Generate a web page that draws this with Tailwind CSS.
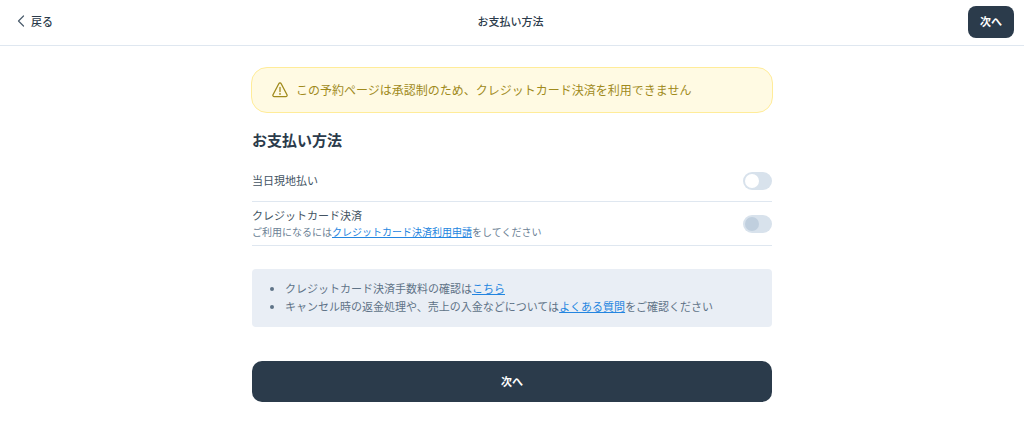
<!DOCTYPE html>
<html lang="ja">
<head>
<meta charset="utf-8">
<meta name="viewport" content="width=device-width, initial-scale=1">
<title>お支払い方法</title>
<script src="https://cdn.jsdelivr.net/npm/@tailwindcss/browser@4"></script>
</head>
<body class="bg-white font-['Noto_Sans_CJK_JP',sans-serif] text-[11px] leading-[18px] text-[#2b3b4b]">
<header class="flex items-center justify-between border-b border-[#dfe7f0] pt-1.5 pb-[7px] pl-[17px] pr-2.5">
  <button type="button" class="flex items-center gap-1.5 pb-0.5 font-medium">
    <svg class="h-3 w-2" viewBox="0 0 8 12" fill="none" stroke="#4a5b6c" stroke-width="1.2" stroke-linecap="round" stroke-linejoin="round" aria-hidden="true"><path d="M6.500 1 1.500 6l5 5"/></svg>
    戻る
  </button>
  <h1 class="pb-0.5 font-medium">お支払い方法</h1>
  <button type="button" class="h-8 rounded-lg bg-[#2b3b4b] px-3 pb-0.5 font-bold text-white">次へ</button>
</header>
<main class="mx-auto max-w-[522px] px-px pt-[21px] pb-9">
  <div role="alert" class="-mx-px flex h-[46px] items-center gap-2 rounded-2xl border border-[#ffec99] bg-[#fffae3] px-5 text-xs text-[#a08a1c]">
    <svg class="h-4 w-4 shrink-0" viewBox="0 0 16 16" fill="none" stroke="currentColor" stroke-width="1.3" stroke-linecap="round" stroke-linejoin="round" aria-hidden="true"><path d="M6.800 1.700a1.350 1.350 0 0 1 2.400 0l5.800 11a1.300 1.300 0 0 1-1.200 1.900H2.200A1.300 1.300 0 0 1 1 12.700zM8 5.300v4.300"/><circle cx="8" cy="11.900" r=".3" fill="currentColor"/></svg>
    <p>この予約ページは承認制のため、クレジットカード決済を利用できません</p>
  </div>
  <h2 class="mt-[15px] text-[15px] leading-6 font-bold">お支払い方法</h2>
  <div class="mt-[9px] flex h-[41px] items-center justify-between border-b border-[#dfe7f0]">
    <label for="onsite" class="pb-0.5 text-[#435362]">当日現地払い</label>
    <input id="onsite" type="checkbox" role="switch" class="h-[18px] w-[29px] appearance-none rounded-full bg-[#d8e2ec] p-0.5 before:block before:h-3.5 before:w-3.5 before:rounded-full before:bg-white checked:bg-[#228be6] checked:before:ml-auto">
  </div>
  <div class="flex h-11 items-center justify-between border-b border-[#dfe7f0]">
    <div class="pb-0.5">
      <label for="card" class="block text-[#435362]">クレジットカード決済</label>
      <p class="text-[10px] leading-4 text-[#6c8195]">ご利用になるには<a href="#" class="text-[#2385e0] underline">クレジットカード決済利用申請</a>をしてください</p>
    </div>
    <input id="card" type="checkbox" role="switch" disabled class="h-[18px] w-[29px] shrink-0 appearance-none rounded-full bg-[#d8e2ec] p-0.5 before:block before:h-3.5 before:w-3.5 before:rounded-full before:bg-[#c0cfde]">
  </div>
  <ul class="mt-[23px] list-disc rounded bg-[#e9eef5] pt-2.5 pr-4 pb-3 pl-[33px] text-[#5f7387]">
    <li>クレジットカード決済手数料の確認は<a href="#" class="text-[#2385e0] underline">こちら</a></li>
    <li>キャンセル時の返金処理や、売上の入金などについては<a href="#" class="text-[#2385e0] underline">よくある質問</a>をご確認ください</li>
  </ul>
  <button type="button" class="mt-[34px] h-[41px] w-full rounded-[10px] bg-[#2b3b4b] pb-0.5 font-bold text-white">次へ</button>
</main>
</body>
</html>
